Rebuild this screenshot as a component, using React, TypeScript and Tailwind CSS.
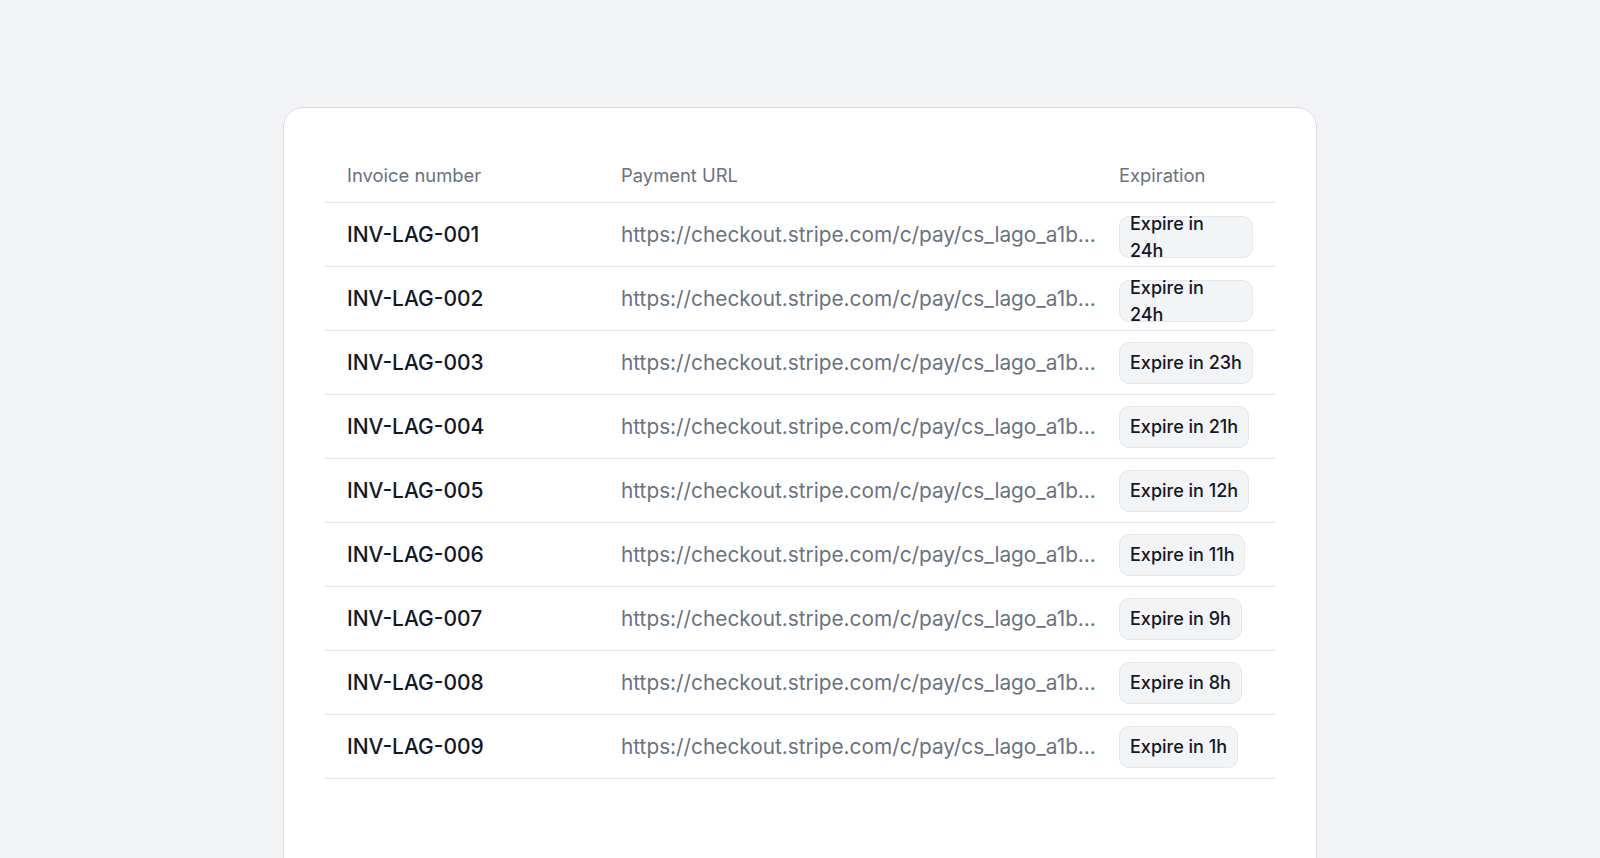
const invoices = [
  { number: 'INV-LAG-001', expires: '24h' },
  { number: 'INV-LAG-002', expires: '24h' },
  { number: 'INV-LAG-003', expires: '23h' },
  { number: 'INV-LAG-004', expires: '21h' },
  { number: 'INV-LAG-005', expires: '12h' },
  { number: 'INV-LAG-006', expires: '11h' },
  { number: 'INV-LAG-007', expires: '9h' },
  { number: 'INV-LAG-008', expires: '8h' },
  { number: 'INV-LAG-009', expires: '1h' },
]

const paymentUrl = 'https://checkout.stripe.com/c/pay/cs_lago_a1b...'

export default function App() {
  return (
    <div
      className="h-screen overflow-hidden bg-[#f3f4f6] pt-[107px]"
      style={{ fontFamily: 'Inter, "Noto Sans", sans-serif' }}
    >
      <div className="mx-auto w-[1034px] min-h-[800px] rounded-[20px] border border-[#d9dce1] bg-white px-[41px] pt-[48px]">
        {/* Header */}
        <div className="grid grid-cols-[274px_498px_1fr] h-[47px] items-center pb-[6px] border-b border-[#e5e7eb] text-[18.4px] text-[#6b7280]">
          <div className="px-[22px]">Invoice number</div>
          <div className="px-[22px]">Payment URL</div>
          <div className="px-[22px]">Expiration</div>
        </div>

        {/* Rows */}
        {invoices.map((invoice) => (
          <div
            key={invoice.number}
            className="grid grid-cols-[274px_498px_1fr] h-[64px] items-center border-b border-[#e5e7eb]"
          >
            <div className="px-[22px] text-[21px] font-medium text-[#111827]">{invoice.number}</div>
            <div className="px-[22px] text-[20.8px] text-[#6b7280] whitespace-nowrap overflow-hidden">
              {paymentUrl}
            </div>
            <div className="px-[22px]">
              <span className="inline-flex h-[42px] items-center rounded-[10px] border border-[#e5e7eb] bg-[#f3f4f6] px-[10px] text-[18px] font-medium text-[#111827]">
                Expire in {invoice.expires}
              </span>
            </div>
          </div>
        ))}
      </div>
    </div>
  )
}
